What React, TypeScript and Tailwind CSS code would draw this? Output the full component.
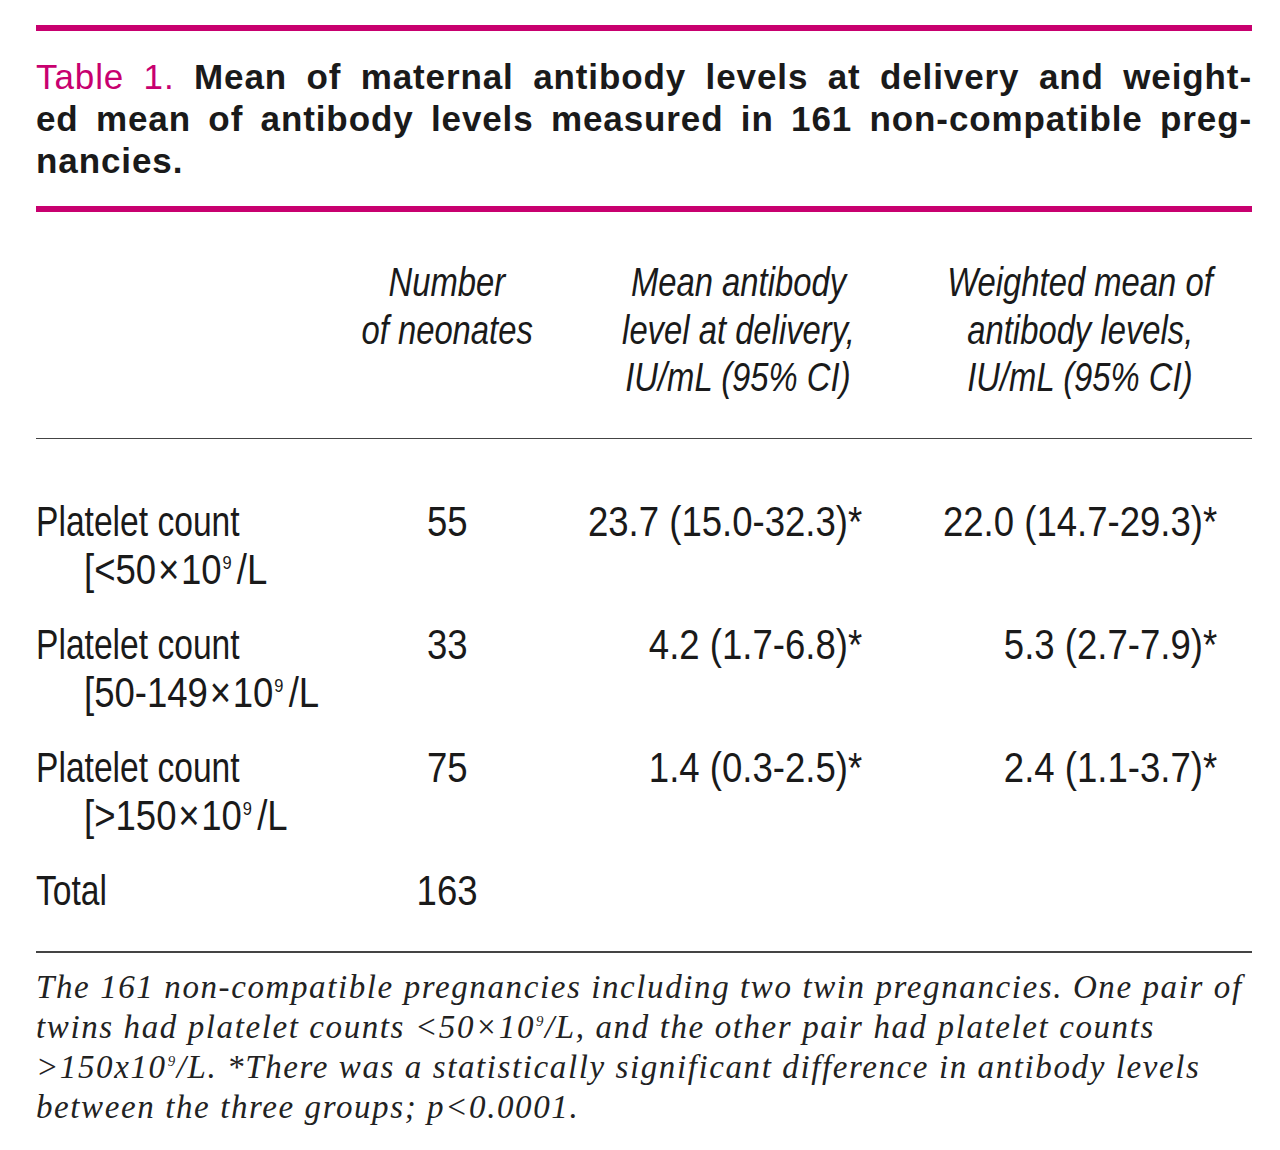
type Align = 'left' | 'center' | 'right';

// No condensed face is installed, so the condensed table type is squeezed horizontally
function Line({
  children,
  align = 'left',
  wide = false,
  className = '',
}: {
  children: React.ReactNode;
  align?: Align;
  wide?: boolean;
  className?: string;
}) {
  const box = align === 'center' ? 'justify-center' : align === 'right' ? 'justify-end' : 'justify-start';
  const origin = align === 'center' ? 'origin-center' : align === 'right' ? 'origin-right' : 'origin-left';
  const squeeze = wide ? 'scale-x-[0.87]' : 'scale-x-[0.8]';
  return (
    <div className={`flex ${box} h-[48px] ${className}`}>
      <span className={`block shrink-0 whitespace-nowrap ${squeeze} ${origin}`}>{children}</span>
    </div>
  );
}

function Sup9({ spaced = false }: { spaced?: boolean }) {
  return (
    <span className={`relative -top-[0.8em] text-[0.45em] leading-none ml-[1px] ${spaced ? 'mr-[6px]' : ''}`}>9</span>
  );
}

const rows = [
  { label: '[<50', n: '55', mean: '23.7 (15.0-32.3)*', weighted: '22.0 (14.7-29.3)*' },
  { label: '[50-149', n: '33', mean: '4.2 (1.7-6.8)*', weighted: '5.3 (2.7-7.9)*' },
  { label: '[>150', n: '75', mean: '1.4 (0.3-2.5)*', weighted: '2.4 (1.1-3.7)*' },
];

const cols = 'grid grid-cols-[321px_180px_402px_282px]';

export default function App() {
  return (
    <div className="w-[1280px] h-[1150px] bg-white text-[#1a1a1a] pl-[36px] pr-[28px] pt-[25px]">
      <div className="h-[6px] bg-[#c8006f]" />

      <div className="mt-[25px] font-['Liberation_Sans',sans-serif] font-bold text-[35px] leading-[42px] tracking-[0.9px]">
        <div className="text-justify [text-align-last:justify]">
          <span className="text-[#c8006f] font-normal">Table 1.</span> Mean of maternal antibody levels at delivery and weight-
        </div>
        <div className="text-justify [text-align-last:justify]">
          ed mean of antibody levels measured in 161 non-compatible preg-
        </div>
        <div>nancies.</div>
      </div>

      <div className="mt-[24px] h-[6px] bg-[#c8006f]" />

      <div className={`${cols} font-['Liberation_Sans',sans-serif] mt-[47px] italic text-[41px] leading-[47.5px]`}>
        <div />
        <div>
          <Line align="center" className="!h-[47.5px]">Number</Line>
          <Line align="center" className="!h-[47.5px]">of neonates</Line>
        </div>
        <div>
          <Line align="center" className="!h-[47.5px]">Mean antibody</Line>
          <Line align="center" className="!h-[47.5px]">level at delivery,</Line>
          <Line align="center" className="!h-[47.5px]">IU/mL (95% CI)</Line>
        </div>
        <div>
          <Line align="center" className="!h-[47.5px]">Weighted mean of</Line>
          <Line align="center" className="!h-[47.5px]">antibody levels,</Line>
          <Line align="center" className="!h-[47.5px]">IU/mL (95% CI)</Line>
        </div>
      </div>

      <div className="mt-[36px] h-[1.5px] bg-[#444]" />

      <div className="font-['Liberation_Sans',sans-serif] mt-[59px] text-[42px] leading-[48px] flex flex-col gap-[27px]">
        {rows.map((r) => (
          <div key={r.n} className={cols}>
            <div>
              <Line>Platelet count</Line>
              <Line wide className="pl-[48px]">
                {r.label}
                <span className="mx-[2px]">×</span>10
                <Sup9 spaced />/L
              </Line>
            </div>
            <Line wide align="center">{r.n}</Line>
            <Line wide align="right" className="pr-[77px]">{r.mean}</Line>
            <Line wide align="right" className="pr-[4px]">{r.weighted}</Line>
          </div>
        ))}
        <div className={cols}>
          <Line>Total</Line>
          <Line wide align="center">163</Line>
        </div>
      </div>

      <div className="mt-[36px] h-[1.5px] bg-[#444]" />

      <div className="mt-[14px] font-['Liberation_Serif',serif] italic text-[33px] leading-[40px] tracking-[1.6px] text-[#222]">
        <div>The 161 non-compatible pregnancies including two twin pregnancies. One pair of</div>
        <div>twins had platelet counts &lt;50×10<Sup9 />/L, and the other pair had platelet counts</div>
        <div>&gt;150x10<Sup9 />/L. *There was a statistically significant difference in antibody levels</div>
        <div>between the three groups; p&lt;0.0001.</div>
      </div>
    </div>
  );
}
